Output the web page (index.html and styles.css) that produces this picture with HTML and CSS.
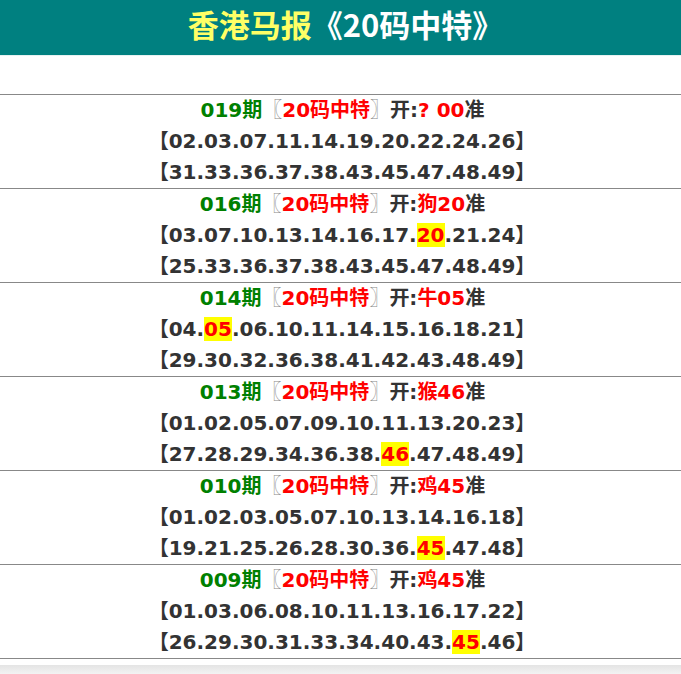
FILE: index.html
```html
<!DOCTYPE html>
<html lang="zh">
<head>
<meta charset="utf-8">
<link rel="stylesheet" href="styles.css">
</head>
<body>
<div class="header"><span class="hk">香港马报</span><span class="name">《20码中特》</span></div>
<div class="spacer"></div>
<div class="list">
  <div class="item">
    <div class="title"><span class="g">019期</span><span class="br">〖</span><span class="r">20码中特</span><span class="br">〗</span>开:<span class="r">? 00</span>准</div>
    <div class="nums">【02.03.07.11.14.19.20.22.24.26】</div>
    <div class="nums">【31.33.36.37.38.43.45.47.48.49】</div>
  </div>
  <div class="item">
    <div class="title"><span class="g">016期</span><span class="br">〖</span><span class="r">20码中特</span><span class="br">〗</span>开:<span class="r">狗20</span>准</div>
    <div class="nums">【03.07.10.13.14.16.17.<span class="hit">20</span>.21.24】</div>
    <div class="nums">【25.33.36.37.38.43.45.47.48.49】</div>
  </div>
  <div class="item">
    <div class="title"><span class="g">014期</span><span class="br">〖</span><span class="r">20码中特</span><span class="br">〗</span>开:<span class="r">牛05</span>准</div>
    <div class="nums">【04.<span class="hit">05</span>.06.10.11.14.15.16.18.21】</div>
    <div class="nums">【29.30.32.36.38.41.42.43.48.49】</div>
  </div>
  <div class="item">
    <div class="title"><span class="g">013期</span><span class="br">〖</span><span class="r">20码中特</span><span class="br">〗</span>开:<span class="r">猴46</span>准</div>
    <div class="nums">【01.02.05.07.09.10.11.13.20.23】</div>
    <div class="nums">【27.28.29.34.36.38.<span class="hit">46</span>.47.48.49】</div>
  </div>
  <div class="item">
    <div class="title"><span class="g">010期</span><span class="br">〖</span><span class="r">20码中特</span><span class="br">〗</span>开:<span class="r">鸡45</span>准</div>
    <div class="nums">【01.02.03.05.07.10.13.14.16.18】</div>
    <div class="nums">【19.21.25.26.28.30.36.<span class="hit">45</span>.47.48】</div>
  </div>
  <div class="item">
    <div class="title"><span class="g">009期</span><span class="br">〖</span><span class="r">20码中特</span><span class="br">〗</span>开:<span class="r">鸡45</span>准</div>
    <div class="nums">【01.03.06.08.10.11.13.16.17.22】</div>
    <div class="nums">【26.29.30.31.33.34.40.43.<span class="hit">45</span>.46】</div>
  </div>
</div>
<div class="foot"></div>
</body>
</html>
```
FILE: styles.css
```css
html, body {
  margin: 0;
  padding: 0;
  background: #fff;
}
body {
  font-family: "DejaVu Sans", "Noto Sans CJK SC", sans-serif;
  color: #333;
}
.header {
  height: 55px;
  background: #008080;
  border-bottom: 1px solid #e6f2f2;
  text-align: center;
  font-family: "Noto Sans CJK SC", sans-serif;
  font-weight: bold;
  font-size: 31px;
  line-height: 47px;
  padding-left: 10px;
}
.hk { color: #ffff66; }
.name { color: #fff; }
.spacer { height: 38px; }
.list {
  border-top: 1px solid #888;
}
.item {
  border-bottom: 1px solid #888;
  text-align: center;
  font-weight: bold;
}
.title {
  font-size: 20px;
  line-height: 31px;
  padding-left: 4px;
}
.nums {
  font-size: 20px;
  line-height: 31px;
  padding-left: 3px;
}
.g { color: #008000; }
.r { color: #ff0000; }
.br { color: #888; font-weight: normal; }
.hit {
  background: #ffff00;
  color: #ff0000;
}
.foot {
  margin-top: 6px;
  height: 12px;
  background: linear-gradient(#e4e4e4, #f8f8f8);
}
```
